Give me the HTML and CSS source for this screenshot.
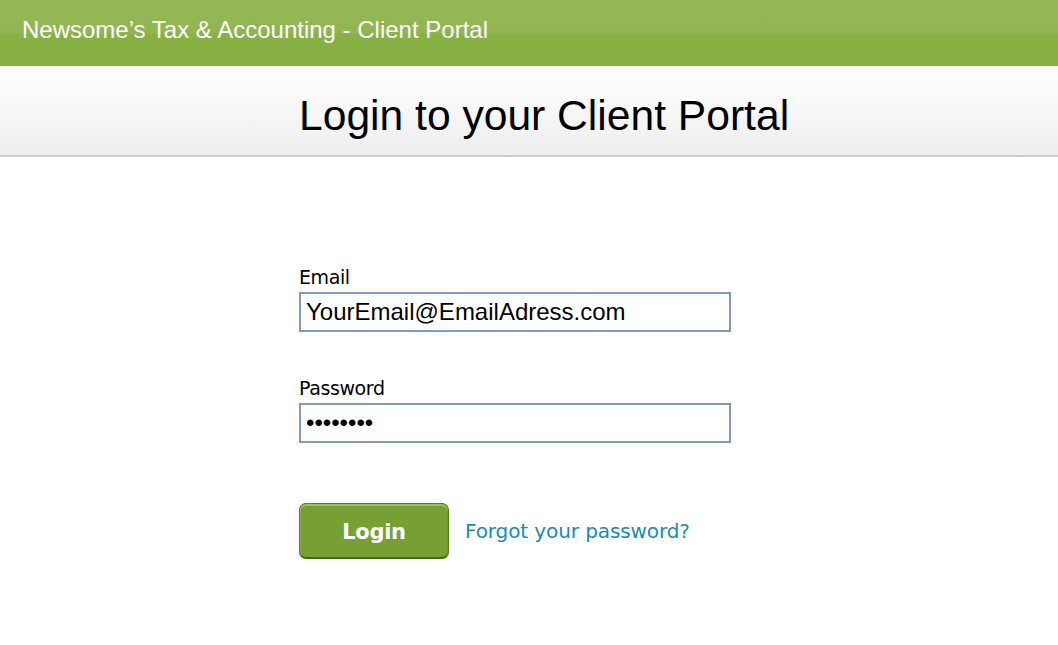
FILE: index.html
```html
<!DOCTYPE html>
<html lang="en">
<head>
<meta charset="utf-8">
<title>Client Portal Login</title>
<link rel="stylesheet" href="styles.css">
</head>
<body>
<header class="topbar">Newsome’s Tax &amp; Accounting - Client Portal</header>
<div class="titleband">
  <div class="container">
    <h1 class="title">Login to your Client Portal</h1>
  </div>
</div>
<main class="container form">
  <label class="label" for="email">Email</label>
  <input class="field" id="email" type="text" value="YourEmail@EmailAdress.com">
  <label class="label label-pw" for="pw">Password</label>
  <input class="field" id="pw" type="password" value="password">
  <div class="actions">
    <button class="btn" type="button">Login</button>
    <a class="forgot" href="#">Forgot your password?</a>
  </div>
</main>
</body>
</html>
```
FILE: styles.css
```css
* { box-sizing: border-box; }
html, body { margin: 0; padding: 0; background: #fff; }
body { font-family: "Liberation Sans", Arial, sans-serif; }

.topbar {
  height: 66px;
  padding: 16px 0 0 22px;
  font-size: 24px;
  line-height: 28px;
  color: #fff;
  background: linear-gradient(to bottom, #95b858 0%, #91b552 50%, #87b142 52%, #86b040 100%);
}

.titleband {
  height: 91px;
  padding-top: 25px;
  background: linear-gradient(to bottom, #ffffff 0%, #f9f9f9 40%, #ededed 100%);
  border-bottom: 2px solid #cdcdcd;
}

.container {
  width: 460px;
  margin: 0 auto;
}

.title {
  margin: 0;
  font-weight: normal;
  font-size: 42.6px;
  line-height: 48px;
  color: #000;
  white-space: nowrap;
}

.form {
  display: flex;
  flex-direction: column;
  align-items: flex-start;
  padding-top: 109px;
}

.label {
  font-family: "DejaVu Sans", Verdana, sans-serif;
  font-size: 19px;
  line-height: 22px;
  color: #000;
  letter-spacing: -0.4px;
}

.label-pw { margin-top: 45px; }

.field {
  margin-top: 4px;
  width: 432px;
  height: 40px;
  padding: 0 5px;
  border: 2px solid #7f9db9;
  font-family: "Liberation Sans", Arial, sans-serif;
  font-size: 24px;
  color: #000;
  background: #fff;
  outline: none;
}

.actions {
  margin-top: 60px;
  display: flex;
  align-items: center;
}

.btn {
  width: 150px;
  height: 56px;
  border-radius: 7px;
  border: 1px solid #557f26;
  border-bottom: 2px solid #44671d;
  background: #77a034;
  box-shadow: inset 0 2px 0 #9cc25f, inset 1px 0 0 #8bb450, inset -1px 0 0 #6e9630;
  font-family: "DejaVu Sans", Verdana, sans-serif;
  font-weight: bold;
  font-size: 21px;
  letter-spacing: -0.3px;
  color: #fff;
  padding: 0;
  padding-top: 2px;
}

.forgot {
  margin-left: 16px;
  font-family: "DejaVu Sans", Verdana, sans-serif;
  font-size: 20px;
  letter-spacing: -0.1px;
  color: #1b8ab6;
  text-decoration: none;
}
```
